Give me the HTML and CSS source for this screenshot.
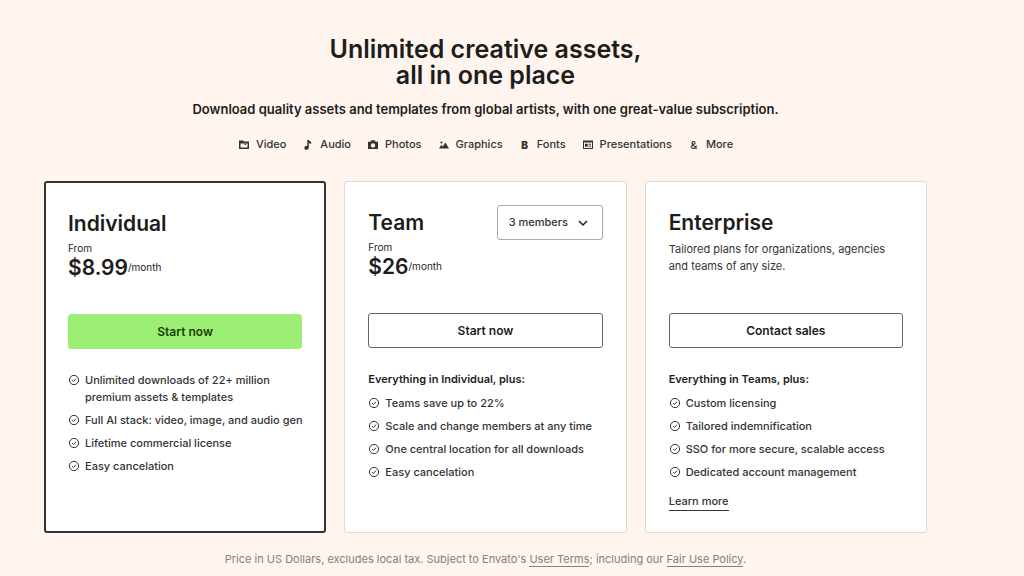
FILE: index.html
```html
<!DOCTYPE html>
<html lang="en">
<head>
  <meta charset="UTF-8">
  <meta name="viewport" content="width=device-width, initial-scale=1.0">
  <title>Pricing</title>
  <link rel="stylesheet" href="styles.css">
</head>
<body>

  <!-- Shared check icon -->
  <svg class="sprite" aria-hidden="true">
    <symbol id="check" viewBox="0 0 12 12">
      <circle cx="6" cy="6" r="4.6" fill="none" stroke="currentColor" stroke-width="1"/>
      <path d="M4 6.1l1.4 1.3L8.2 4.7" fill="none" stroke="currentColor" stroke-width="1"/>
    </symbol>
  </svg>

  <main class="page">
    <header class="hero">
      <h1>Unlimited creative assets,<br>all in one place</h1>
      <p class="subtitle">Download quality assets and templates from global artists, with one great-value subscription.</p>
      <ul class="categories">
        <li>
          <svg class="cat-icon" viewBox="0 0 12 12"><path fill="currentColor" fill-rule="evenodd" d="M1 1.500h4l1 1h5v7.500H1zM2.500 4.500v4h7v-4z"/><path fill="currentColor" d="M6.500 4.500h1.500v1.500H6.500z"/></svg>
          Video
        </li>
        <li>
          <svg class="cat-icon" viewBox="0 0 12 12"><path fill="currentColor" d="M5.300 1h1.500l2.400 2.300v1.800L6.800 3.900v4.800A2.200 2 0 1 1 5.300 6.900z"/></svg>
          Audio
        </li>
        <li>
          <svg class="cat-icon" viewBox="0 0 12 12"><path fill="currentColor" fill-rule="evenodd" d="M1 2.700h2.500l.8-1.500h3.400l.8 1.500H11v7.300H1zM6 4.200a2.200 2.200 0 1 0 0 4.400 2.200 2.200 0 0 0 0-4.400z"/></svg>
          Photos
        </li>
        <li>
          <svg class="cat-icon" viewBox="0 0 12 12"><path fill="currentColor" d="M1 9.500l2.200-3.500 1.600 1.500L7.300 3.500 11 9.500z"/><circle cx="3.500" cy="3.500" r="1.100" fill="currentColor"/></svg>
          Graphics
        </li>
        <li><span class="cat-icon glyph-bold" aria-hidden="true">B</span>Fonts</li>
        <li>
          <svg class="cat-icon" viewBox="0 0 12 12"><path fill="currentColor" fill-rule="evenodd" d="M1 1.500h10V10H1zM2 3.500V9h8V3.500z"/><path fill="currentColor" d="M3 4.700h2.700v3H3zM6.600 4.700H9v1H6.600zM6.600 6.700H9v1H6.600z"/></svg>
          Presentations
        </li>
        <li><span class="cat-icon glyph" aria-hidden="true">&amp;</span>More</li>
      </ul>
    </header>

    <section class="plans">
      <article class="card selected">
        <div class="card-head">
          <h2>Individual</h2>
          <p class="from">From</p>
          <p class="price">$8.99<span>/month</span></p>
        </div>
        <button class="btn primary" type="button">Start now</button>
        <ul class="features">
          <li><svg class="check"><use href="#check"/></svg>Unlimited downloads of 22+ million<br>premium assets &amp; templates</li>
          <li><svg class="check"><use href="#check"/></svg>Full AI stack: video, image, and audio gen</li>
          <li><svg class="check"><use href="#check"/></svg>Lifetime commercial license</li>
          <li><svg class="check"><use href="#check"/></svg>Easy cancelation</li>
        </ul>
      </article>

      <article class="card">
        <div class="card-head">
          <div class="title-row">
            <h2>Team</h2>
            <div class="members">
              <select aria-label="Team members">
                <option>3 members</option>
                <option>4 members</option>
                <option>5 members</option>
              </select>
              <svg class="chevron" viewBox="0 0 12 12"><path d="M2 4l4 4 4-4" fill="none" stroke="currentColor" stroke-width="1.500"/></svg>
            </div>
          </div>
          <p class="from">From</p>
          <p class="price">$26<span>/month</span></p>
        </div>
        <button class="btn" type="button">Start now</button>
        <h3>Everything in Individual, plus:</h3>
        <ul class="features">
          <li><svg class="check"><use href="#check"/></svg>Teams save up to 22%</li>
          <li><svg class="check"><use href="#check"/></svg>Scale and change members at any time</li>
          <li><svg class="check"><use href="#check"/></svg>One central location for all downloads</li>
          <li><svg class="check"><use href="#check"/></svg>Easy cancelation</li>
        </ul>
      </article>

      <article class="card">
        <div class="card-head">
          <h2>Enterprise</h2>
          <p class="summary">Tailored plans for organizations, agencies<br>and teams of any size.</p>
        </div>
        <button class="btn" type="button">Contact sales</button>
        <h3>Everything in Teams, plus:</h3>
        <ul class="features">
          <li><svg class="check"><use href="#check"/></svg>Custom licensing</li>
          <li><svg class="check"><use href="#check"/></svg>Tailored indemnification</li>
          <li><svg class="check"><use href="#check"/></svg>SSO for more secure, scalable access</li>
          <li><svg class="check"><use href="#check"/></svg>Dedicated account management</li>
        </ul>
        <a class="learn-more" href="#">Learn more</a>
      </article>
    </section>

    <footer class="terms">
      Price in US Dollars, excludes local tax. Subject to Envato's <a href="#">User Terms</a>; including our <a href="#">Fair Use Policy</a>.
    </footer>
  </main>

</body>
</html>
```
FILE: styles.css
```css
* {
  box-sizing: border-box;
}

body {
  margin: 0;
  background-color: #fff4ee;
  color: #1d1d1b;
  font-family: Inter, "Liberation Sans", sans-serif;
  font-size: 11px;
  line-height: 17px;
}

h1, h2, h3, p, ul {
  margin: 0;
  padding: 0;
}

ul {
  list-style: none;
}

a {
  color: inherit;
  text-decoration: none;
  border-bottom: 1px solid currentColor;
}

.sprite {
  display: none;
}

.page {
  padding: 36px 97px 8px 44px;
}

.hero {
  text-align: center;
}

h1 {
  font-size: 25px;
  line-height: 26px;
  font-weight: 600;
}

.subtitle {
  margin-top: 12px;
  font-size: 13px;
  line-height: 18px;
  font-weight: 600;
}

.categories {
  display: flex;
  justify-content: center;
  gap: 16px;
  margin-top: 18px;
  font-weight: 500;
  color: #333;
}

.categories li {
  display: flex;
  align-items: center;
  gap: 6px;
}

.cat-icon {
  width: 12px;
  height: 12px;
  line-height: 12px;
  text-align: center;
}

.glyph-bold {
  font-size: 10px;
  font-weight: 900;
}

.glyph {
  font-weight: 500;
}

/* Plan cards */
.plans {
  display: grid;
  grid-template-columns: repeat(3, minmax(0, 1fr));
  gap: 18px;
  margin-top: 28px;
}

.card {
  display: flex;
  flex-direction: column;
  padding: 23px 23px 21px;
  background-color: #fff;
  border: 1px solid #dedad7;
  border-radius: 3px;
}

.card.selected {
  padding: 23px 22px 20px;
  border: 2px solid #333;
}

.card-head {
  min-height: 108px;
}

.title-row {
  display: flex;
  justify-content: space-between;
  align-items: flex-start;
}

h2 {
  font-size: 21px;
  line-height: 36px;
  font-weight: 600;
}

.from {
  font-size: 10px;
  line-height: 13px;
}

.price {
  display: flex;
  align-items: center;
  font-size: 21px;
  line-height: 25px;
  font-weight: 600;
}

.price span {
  font-size: 10px;
  font-weight: 400;
}

.summary {
  color: #333;
}

.members {
  display: grid;
  align-items: center;
}

.members select {
  grid-area: 1 / 1;
  width: 106px;
  height: 35px;
  padding: 0 11px;
  appearance: none;
  background-color: #fff;
  border: 1px solid #aaa;
  border-radius: 3px;
  color: #333;
  font: inherit;
  font-weight: 500;
}

.chevron {
  grid-area: 1 / 1;
  justify-self: end;
  width: 12px;
  height: 12px;
  margin-right: 14px;
  pointer-events: none;
}

.btn {
  height: 35px;
  background-color: #fff;
  border: 1px solid #666;
  border-radius: 3px;
  color: #1d1d1b;
  font-family: inherit;
  font-size: 12px;
  font-weight: 600;
  cursor: pointer;
}

.btn.primary {
  background-color: #9cee74;
  border-color: #9cee74;
  color: #1a4200;
}

h3 {
  margin-top: 23px;
  font-size: 11px;
  line-height: 17px;
  font-weight: 600;
}

.features {
  display: flex;
  flex-direction: column;
  gap: 6px;
  margin-top: 7px;
  color: #333;
  font-weight: 500;
  white-space: nowrap;
}

.btn + .features {
  margin-top: 23px;
}

.features li {
  padding-left: 17px;
}

.check {
  float: left;
  width: 12px;
  height: 12px;
  margin: 2px 0 0 -17px;
}

.learn-more {
  align-self: flex-start;
  margin-top: 12px;
  color: #333;
  font-weight: 500;
}

.terms {
  margin-top: 18px;
  text-align: center;
  color: #85807c;
}
```
